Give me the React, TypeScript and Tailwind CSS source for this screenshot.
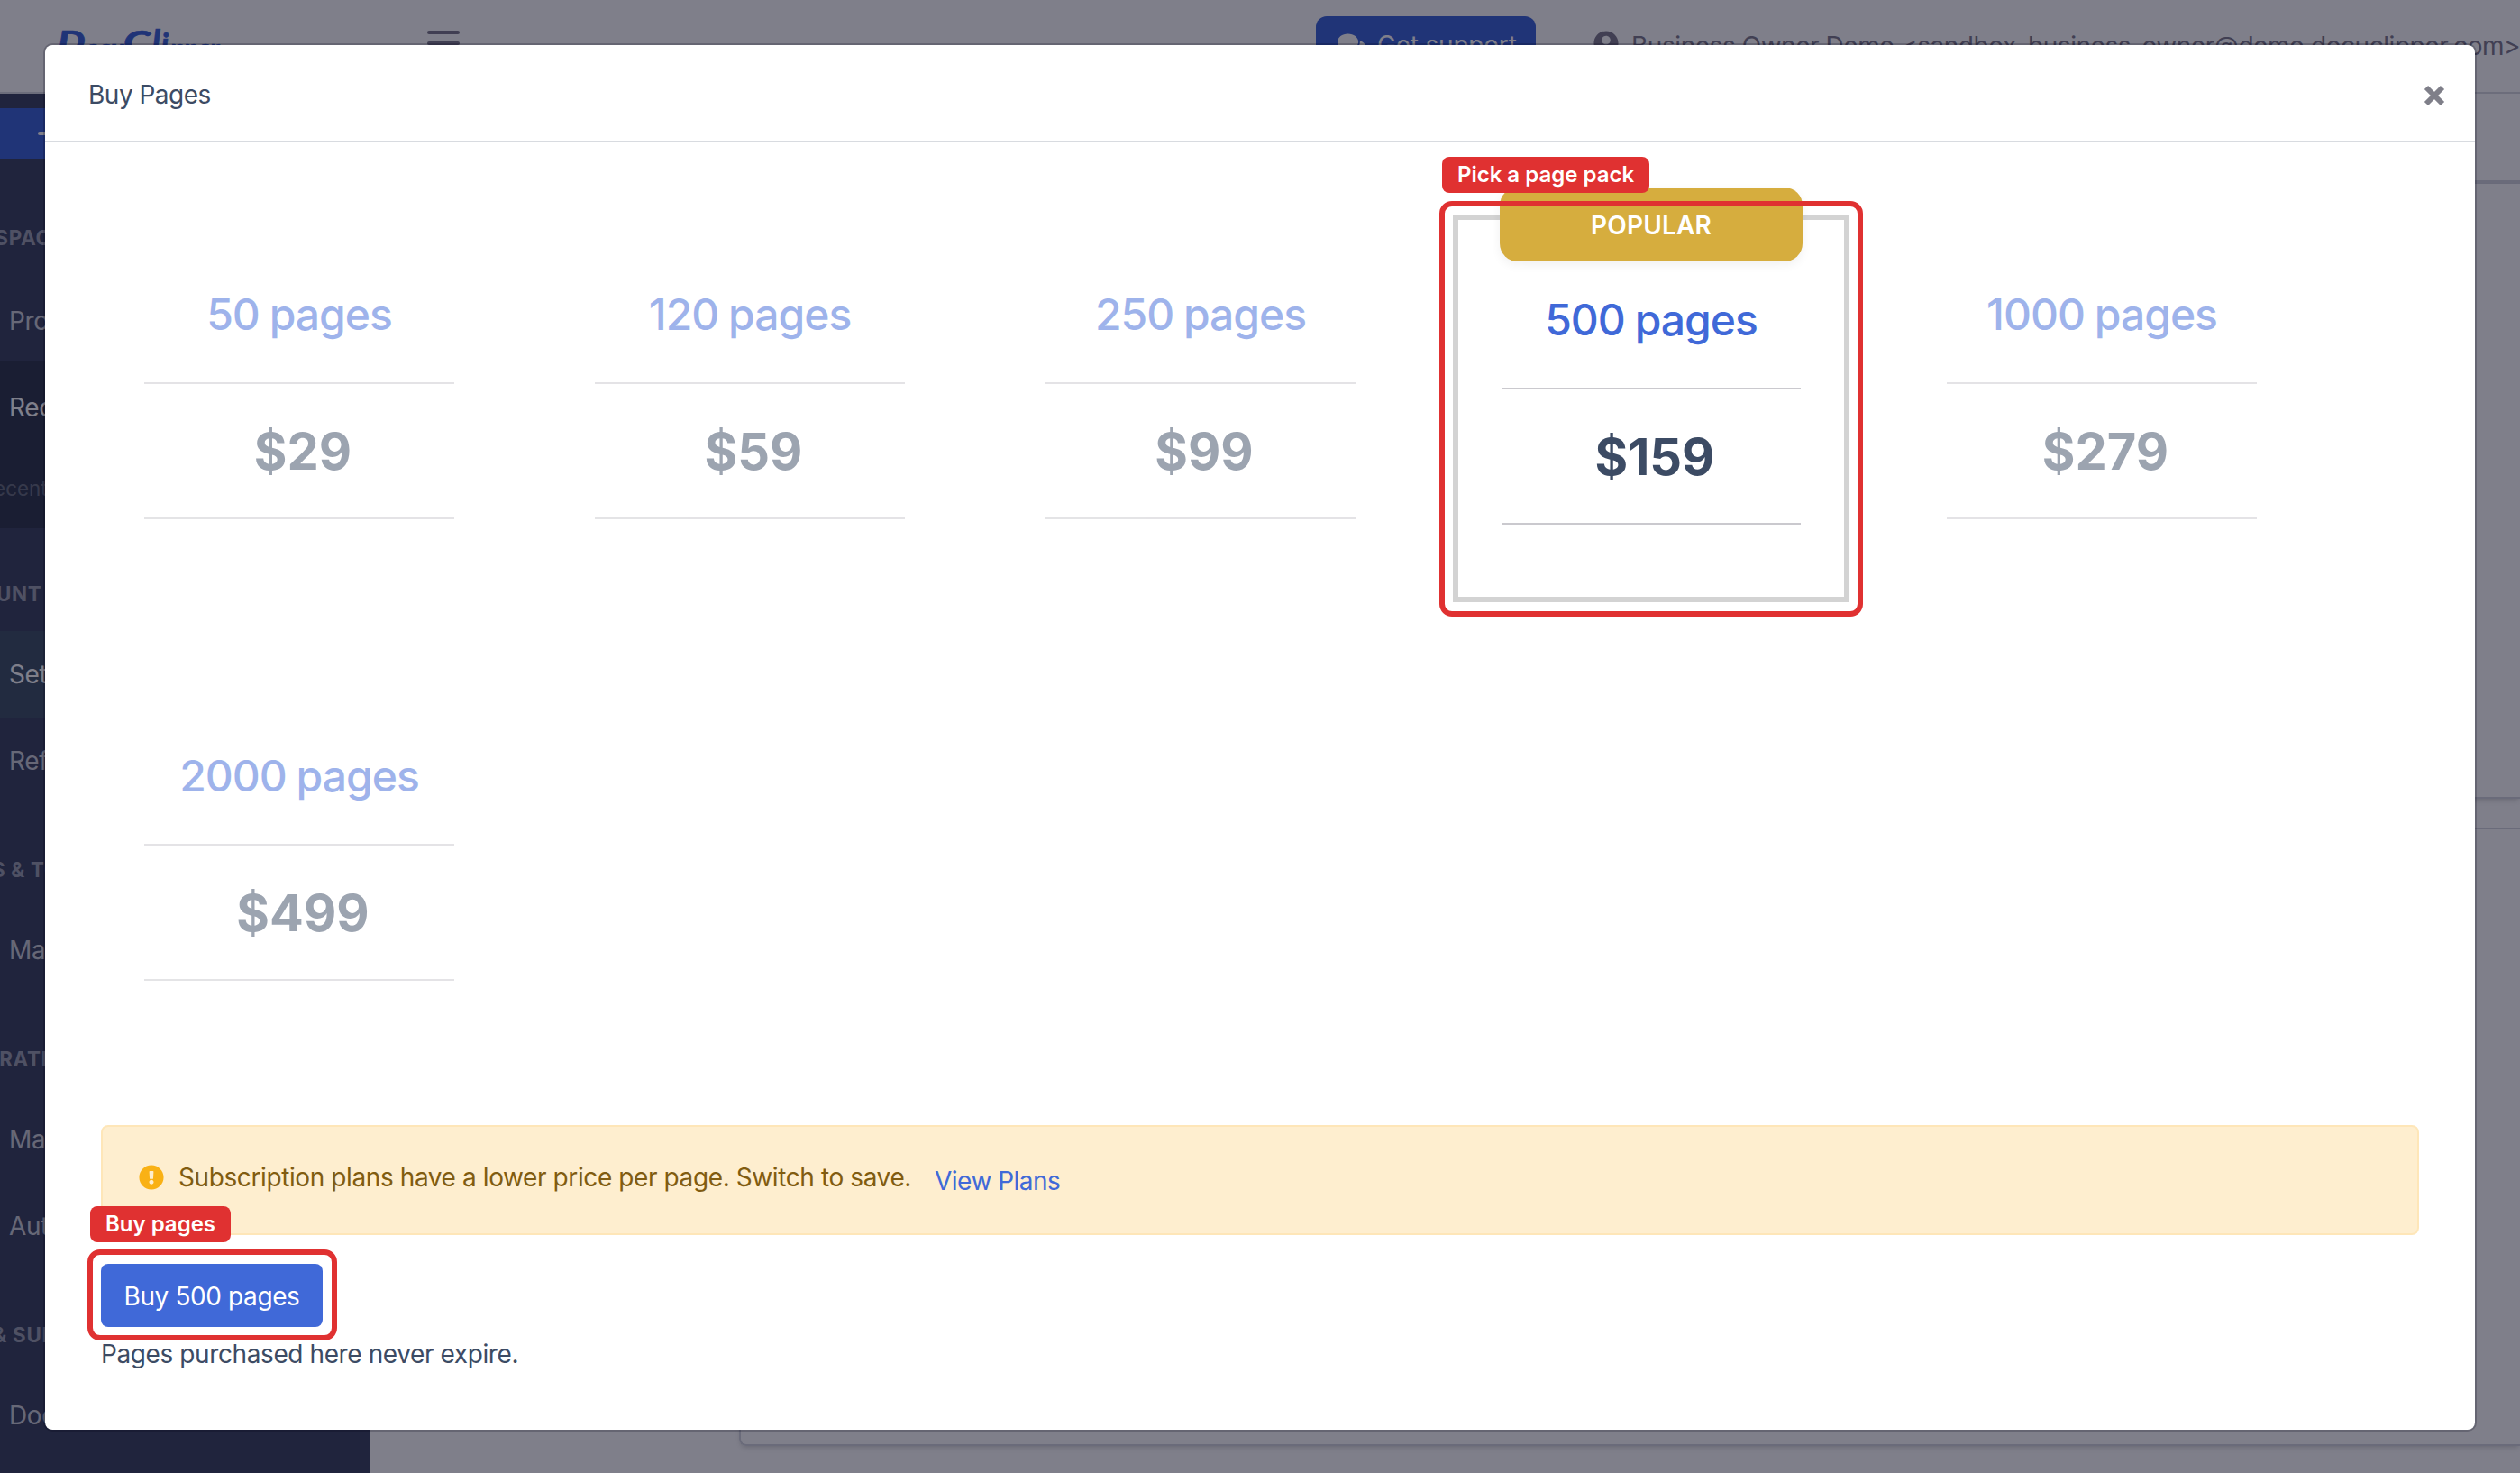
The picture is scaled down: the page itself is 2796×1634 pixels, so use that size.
import { FaComments, FaExclamationCircle, FaUserCircle } from 'react-icons/fa';

interface PagePack {
  pages: number;
  price: number;
  popular?: boolean;
}

interface NavItem {
  label: string;
  className: string;
}

interface NavSection {
  title: string;
  titleClass: string;
  items: NavItem[];
}

const packs: PagePack[] = [
  { pages: 50, price: 29 },
  { pages: 120, price: 59 },
  { pages: 250, price: 99 },
  { pages: 500, price: 159, popular: true },
  { pages: 1000, price: 279 },
  { pages: 2000, price: 499 },
];

const sections: NavSection[] = [
  {
    title: 'WORKSPACE',
    titleClass: '-ml-[79px]',
    items: [
      { label: 'Process', className: 'text-white/75 pt-1.5' },
      { label: 'Recent', className: 'bg-[#343c51] text-white pt-1.5' },
    ],
  },
  {
    title: 'ACCOUNT',
    titleClass: '-ml-[73px]',
    items: [
      { label: 'Settings', className: 'bg-[#44566b] text-white' },
      { label: 'Referrals', className: 'text-white/75' },
    ],
  },
  {
    title: 'TEAMS & TOOLS',
    titleClass: '-ml-[78px]',
    items: [{ label: 'Manage', className: 'text-white/75' }],
  },
  {
    title: 'INTEGRATIONS',
    titleClass: '-ml-[73px]',
    items: [
      { label: 'Manage', className: 'text-white/75' },
      { label: 'Automate', className: 'text-white/75' },
    ],
  },
  {
    title: 'HELP & SUPPORT',
    titleClass: '-ml-[74px]',
    items: [{ label: 'Docs', className: 'text-white/75' }],
  },
];

function Logo() {
  return (
    <svg width="190" height="50" viewBox="0 0 190 50" className="ml-[62px]" fill="#4069d8" stroke="#4069d8" strokeWidth="0.6" fontFamily="Lato, sans-serif" fontWeight="900" fontStyle="italic">
      <text x="2" y="32" fontSize="32" textLength="30" lengthAdjust="spacingAndGlyphs">D</text>
      <text x="33" y="36" fontSize="25" textLength="43" lengthAdjust="spacingAndGlyphs">ocu</text>
      <text x="75" y="33" fontSize="34" textLength="29" lengthAdjust="spacingAndGlyphs">C</text>
      <text x="107" y="33" fontSize="36" textLength="10">l</text>
      <text x="117" y="34" fontSize="32" textLength="10">i</text>
      <text x="127" y="36" fontSize="25" textLength="54" lengthAdjust="spacingAndGlyphs">pper</text>
    </svg>
  );
}

function TopBar() {
  return (
    <header className="h-[104px] shrink-0 flex items-start bg-white border-b-2 border-[#d8dbe0] pt-[18px]">
      <div className="w-[474px] shrink-0 pt-2">
        <Logo />
      </div>
      <div className="w-9 shrink-0 pt-4 flex flex-col gap-2">
        <span className="h-1 rounded-sm bg-[#827f90]" />
        <span className="h-1 rounded-sm bg-[#827f90]" />
        <span className="h-1 rounded-sm bg-[#827f90]" />
      </div>
      <button type="button" className="ml-[950px] w-[244px] h-[64px] shrink-0 rounded-xl bg-[#4069d8] text-white flex items-center pl-6 gap-3">
        <FaComments className="w-8 h-8 shrink-0" />
        <span className="tracking-[-0.2px]">Get support</span>
      </button>
      <div className="ml-16 h-[66px] flex items-center gap-3.5 text-[#827f90] tracking-[-0.45px] whitespace-nowrap">
        <FaUserCircle className="w-7 h-7 shrink-0 -mt-1.5" />
        <span>Business Owner Demo &lt;sandbox_business_owner@demo.docuclipper.com&gt;</span>
      </div>
    </header>
  );
}

function Sidebar() {
  return (
    <nav className="w-[410px] shrink-0 bg-[#404865] pt-4 overflow-hidden whitespace-nowrap">
      <div className="h-14 mb-[15px] bg-[#4069d8] flex items-center pl-[42px]">
        <span className="w-6 h-1 rounded-sm bg-white" />
      </div>
      {sections.map((section) => (
        <div key={section.title}>
          <div className="h-[114px] pt-[59px]">
            <div className={`text-[22.4px] leading-7 font-bold tracking-[0.7px] text-white/50 ${section.titleClass}`}>
              {section.title}
            </div>
          </div>
          {section.items.map((item) => (
            <div key={item.label} className={`h-24 flex items-center pl-2.5 ${item.className}`}>
              {item.label}
            </div>
          ))}
          {section.title === 'WORKSPACE' && (
            <div className="h-[89px] bg-[#343c51] text-[22.4px] text-white/30 flex items-center tracking-normal">
              <span className="-ml-[21px]">Recent files</span>
            </div>
          )}
        </div>
      ))}
    </nav>
  );
}

function Backdrop() {
  return (
    <div className="w-full h-full flex flex-col">
      <TopBar />
      <div className="flex-1 min-h-0 flex">
        <Sidebar />
        <main className="flex-1 min-w-0 bg-white">
          <div className="h-[100px] border-b-4 border-[#d4d6de]" />
          <div className="pl-[410px]">
            <div className="h-[682px] border-2 border-t-0 border-r-0 border-[#d4d6de] rounded-bl-lg shadow-md" />
            <div className="mt-8 h-[686px] border-2 border-r-0 border-[#d4d6de] rounded-l-lg shadow-md" />
          </div>
        </main>
      </div>
    </div>
  );
}

function Callout({ label, className }: { label: string; className: string }) {
  return (
    <div className={`absolute h-10 rounded-lg bg-[#e03131] text-white text-[24px] leading-10 font-semibold tracking-normal text-center whitespace-nowrap ${className}`}>
      {label}
    </div>
  );
}

function PackCard({ pages, price, popular }: PagePack) {
  return (
    <div
      className={`relative h-[430px] px-12 text-center ${
        popular ? 'border-[6px] border-[#d3d3d3]' : 'opacity-50'
      }`}
    >
      {popular && (
        <div className="absolute left-[46px] -top-9 w-[336px] h-[82px] rounded-[20px] bg-[#d6ad3e] shadow-[0_4px_12px_rgba(0,0,0,0.06)] text-white font-semibold leading-[85px] tracking-[0.2px]">
          POPULAR
        </div>
      )}
      <div className="h-[188px] pt-[81px] border-b-2 border-[#cac9ce] text-[48px] leading-[60px] font-medium tracking-[-1px] [word-spacing:-1px] text-[#4069d8]">
        {pages} pages
      </div>
      <div className="h-[150px] pt-[41px] pl-2 border-b-2 border-[#cac9ce] text-[56px] leading-[68px] font-bold tracking-normal text-[#3c4b64]">
        ${price}
      </div>
      {popular && (
        <>
          <div className="absolute -left-[21px] -top-[21px] w-[470px] h-[461px] border-[6px] border-[#e03131] rounded-[14px]" />
          <Callout label="Pick a page pack" className="-left-[18px] -top-[70px] w-[230px]" />
        </>
      )}
    </div>
  );
}

function BuyPagesModal() {
  return (
    <div className="w-[2700px] h-[1540px] bg-white bg-clip-padding border-2 border-[#000015]/20 rounded-[10px] flex flex-col">
      <div className="h-[108px] shrink-0 border-b-2 border-[#d8dbe0] flex items-center justify-between pt-[3px] pl-12 pr-[33px]">
        <h5 className="tracking-[-0.5px]">Buy Pages</h5>
        <button type="button" aria-label="Close" className="mt-0.5">
          <svg width="24" height="24" viewBox="0 0 24 24" stroke="#7f7f89" strokeWidth="6">
            <path d="M3 3L21 21M21 3L3 21" />
          </svg>
        </button>
      </div>

      <div className="px-[62px] pt-20">
        <div className="grid grid-cols-[repeat(5,440px)] gap-x-[60px] gap-y-[82px]">
          {packs.map((pack) => (
            <PackCard key={pack.pages} {...pack} />
          ))}
        </div>

        <div className="mt-[68px] h-[122px] rounded-lg border-2 border-[#fee6b8] bg-[#feeecf] text-[#815c10] flex items-center pl-10 pb-1">
          <FaExclamationCircle className="w-7 h-7 -mt-0.5 text-[#f9b115]" />
          <span className="ml-4 -mt-0.5">Subscription plans have a lower price per page. Switch to save.</span>
          <a className="ml-[26px] mt-1.5 tracking-[-0.5px] text-[#4069d8]">View Plans</a>
        </div>

        <div className="relative mt-8 w-[246px]">
          <button type="button" className="block w-[246px] h-[70px] pt-0.5 rounded-lg bg-[#4069d8] text-white">
            Buy 500 pages
          </button>
          <div className="absolute -left-[15px] -top-4 w-[277px] h-[101px] border-[6px] border-[#e03131] rounded-[14px]" />
          <Callout label="Buy pages" className="-left-3 -top-16 w-[156px]" />
        </div>
        <p className="mt-[9px]">Pages purchased here never expire.</p>
      </div>
    </div>
  );
}

export default function App() {
  return (
    <div className="relative w-[2796px] h-[1634px] overflow-hidden bg-white font-['Inter',sans-serif] text-[28px] leading-[42px] tracking-[-0.4px] text-[#3c4b64]">
      <Backdrop />
      <div className="absolute inset-0 bg-[#000015]/50 p-12">
        <BuyPagesModal />
      </div>
    </div>
  );
}
